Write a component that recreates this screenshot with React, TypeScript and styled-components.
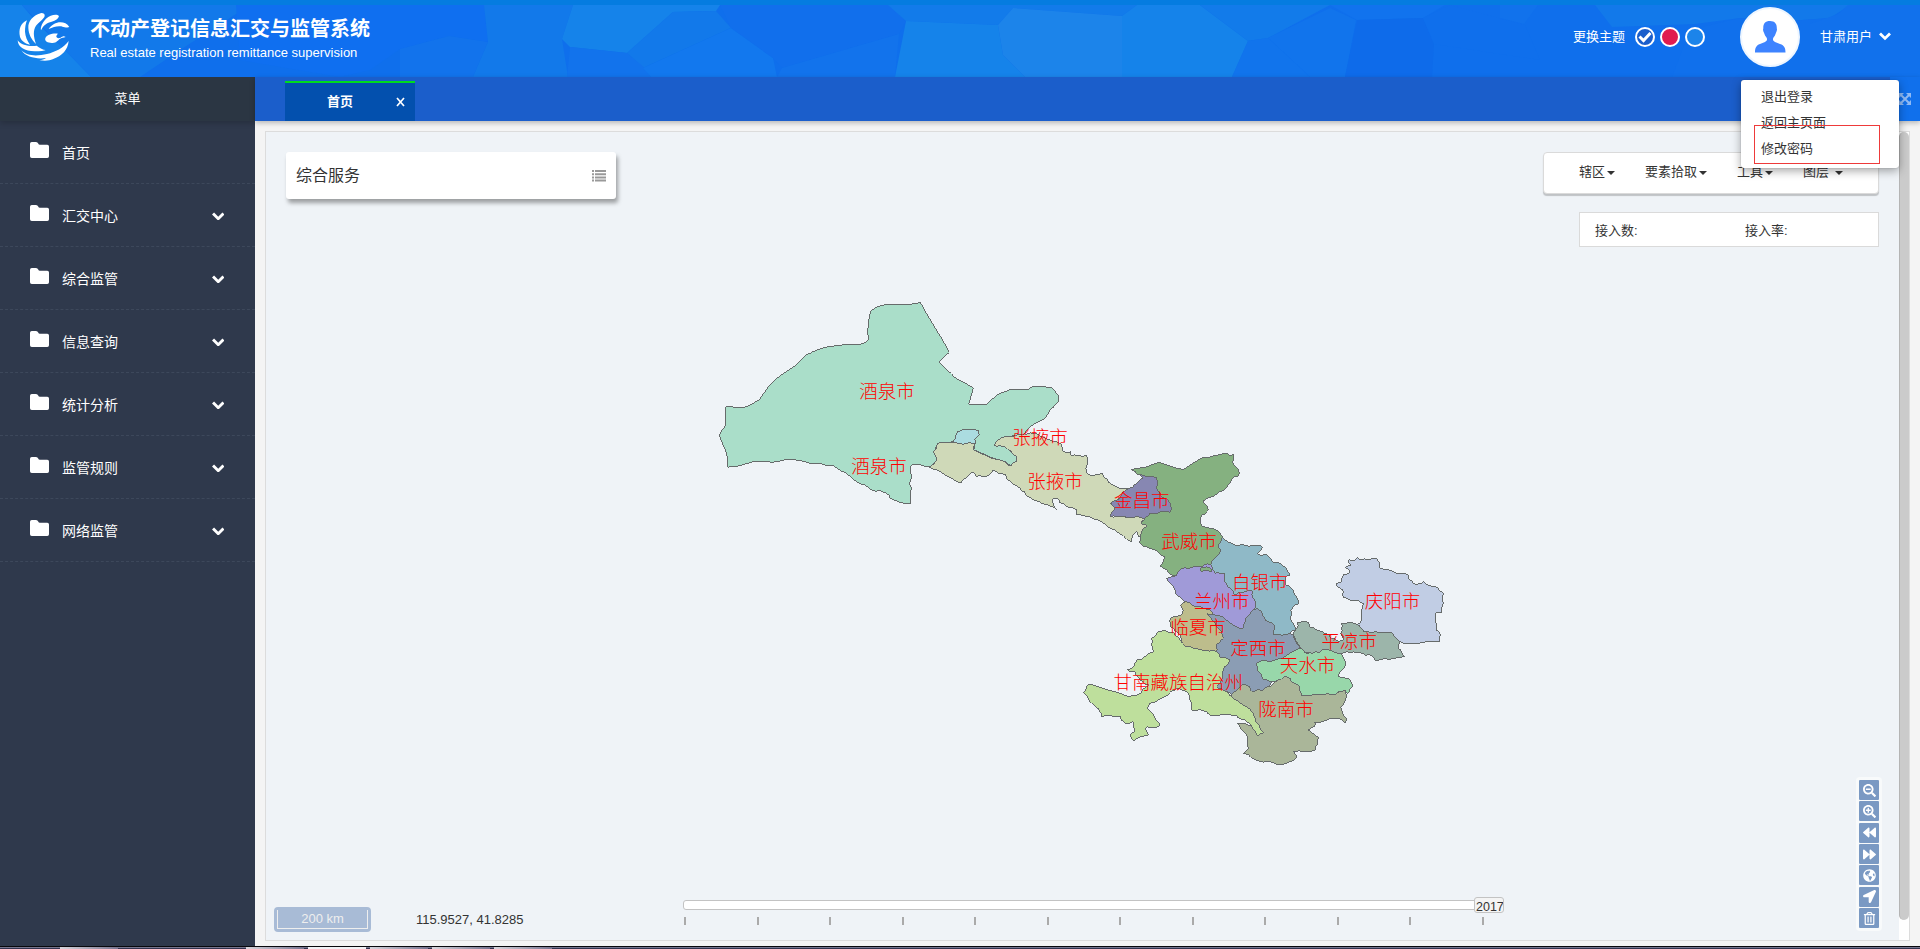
import React from "react";
import styled, { createGlobalStyle } from "styled-components";
import {
  FaSearchMinus,
  FaSearchPlus,
  FaBackward,
  FaForward,
  FaLocationArrow,
  FaGlobeAmericas,
  FaRegTrashAlt,
} from "react-icons/fa";

const GlobalStyle = createGlobalStyle`
  * { box-sizing: border-box; }
  body {
    margin: 0;
    overflow: hidden;
    background: #f3f3f3;
    color: #333;
    font: 13px/20px "Liberation Sans", "Noto Sans CJK SC", sans-serif;
  }
`;

const Page = styled.div`
  display: flex;
  flex-direction: column;
  width: 1920px;
  height: 949px;
`;

/* ---------- header ---------- */

const Header = styled.header`
  position: relative;
  flex: none;
  display: flex;
  height: 77px;
  color: #fff;
  background: #0f6fec;
`;

const HeaderArt = styled.svg`
  position: absolute;
  inset: 0;
`;

const Brand = styled.div`
  position: relative;
  display: flex;
  flex: 1;
`;

const Logo = styled.svg`
  flex: none;
  margin: 4px 10px 0 10px;
`;

const BrandText = styled.div`
  padding-top: 17px;
`;

const Title = styled.h1`
  margin: 0;
  font-size: 20px;
  line-height: 25px;
  font-weight: 700;
`;

const Subtitle = styled.div`
  margin-top: 1px;
  line-height: 20px;
  white-space: nowrap;
`;

const HeaderTools = styled.div`
  position: relative;
  display: flex;
  width: 347px;
`;

const ThemePicker = styled.div`
  display: flex;
  align-items: center;
  gap: 5px;
  height: 74px;
  width: 167px;
`;

const ThemeLabel = styled.span`
  width: 57px;
`;

const Swatch = styled.span<{ $color: string }>`
  display: flex;
  align-items: center;
  justify-content: center;
  width: 20px;
  height: 20px;
  border: 2px solid #fff;
  border-radius: 50%;
  background: ${(p) => p.$color};
`;

const Avatar = styled.div`
  display: flex;
  justify-content: center;
  width: 60px;
  height: 60px;
  margin-top: 7px;
  border-radius: 50%;
  border: 2px solid #eef6ff;
  background: #fff;
`;

const UserName = styled.div`
  display: flex;
  align-items: center;
  gap: 7px;
  height: 73px;
  margin-left: 20px;
`;

/* ---------- sidebar ---------- */

const Body = styled.div`
  display: flex;
  height: 869px;
`;

const Sidebar = styled.nav`
  flex: none;
  width: 255px;
  background: #2f394c;
  color: #fff;
`;

const MenuTitle = styled.div`
  height: 44px;
  background: #2b3643;
  box-shadow: 0 2px 6px rgba(0, 0, 0, 0.2);
  line-height: 44px;
  text-align: center;
`;

const MenuItem = styled.div`
  display: flex;
  align-items: center;
  height: 63px;
  padding: 2px 31px 0 30px;
  border-bottom: 1px dashed #3d485b;
  font-size: 14px;
`;

const FolderIcon = styled.svg`
  width: 19px;
  height: 16px;
  margin-bottom: 7px;
`;

const MenuLabel = styled.span`
  flex: 1;
  padding-left: 13px;
`;

/* ---------- workspace ---------- */

const Workspace = styled.main`
  flex: 1;
  display: flex;
  flex-direction: column;
  background: #f4f4f4;
`;

const TabBar = styled.div`
  position: relative;
  flex: none;
  display: flex;
  align-items: flex-end;
  height: 44px;
  padding-left: 30px;
  background: #1b5ecb;
  box-shadow: 0 2px 5px rgba(0, 0, 0, 0.25);
`;

const Tab = styled.div`
  display: flex;
  align-items: center;
  width: 130px;
  height: 40px;
  padding: 0 10px 0 42px;
  border-top: 2px solid #00dc1c;
  background: #0350ae;
  color: #fff;
  font-weight: 700;
`;

const TabName = styled.span`
  flex: 1;
`;

const FullScreen = styled.div`
  display: flex;
  align-items: center;
  width: 30px;
  height: 44px;
  margin-left: auto;
  padding: 0 0 1px 8px;
  background: #1070ec;
`;

const Panel = styled.section`
  position: relative;
  width: 1645px;
  height: 810px;
  margin: 10px 0 0 10px;
  border: 1px solid #dcdcdc;
  background: #eff3f7;
`;

const MapCanvas = styled.svg`
  display: block;
`;

const MapLabel = styled.text`
  fill: #f00;
  font-family: "Noto Sans CJK SC", sans-serif;
  font-size: 18.5px;
  font-weight: 300;
  text-anchor: middle;
`;

const ScrollTrack = styled.div`
  position: absolute;
  top: 0;
  right: 0;
  width: 10px;
  height: 808px;
  background: #fff;
`;

const ScrollThumb = styled.div`
  width: 10px;
  height: 788px;
  border-left: 1px solid #b4b4b4;
  border-radius: 5px;
  background: #cbcbcb;
`;

const ServiceCard = styled.div`
  position: absolute;
  top: 20px;
  left: 20px;
  display: flex;
  align-items: center;
  justify-content: space-between;
  width: 330px;
  height: 47px;
  padding: 0 10px;
  border-radius: 3px;
  background: #fff;
  box-shadow: 2px 4px 4px rgba(0, 0, 0, 0.35);
  font-size: 16px;
`;

const MapToolbar = styled.div`
  position: absolute;
  top: 20px;
  left: 1277px;
  display: flex;
  width: 336px;
  height: 42px;
  padding: 9px 0 0 35px;
  border: 1px solid #dadada;
  border-radius: 4px;
  background: #fff;
  box-shadow: 0 2px 1px rgba(0, 0, 0, 0.2);
`;

const ToolbarItem = styled.div<{ $width: number; $gap?: number }>`
  display: flex;
  align-items: center;
  gap: ${(p) => p.$gap ?? 2}px;
  width: ${(p) => p.$width}px;
  height: 20px;

  &::after {
    content: "";
    margin-top: 2px;
    border: 4px solid transparent;
    border-top-color: #333;
    border-bottom: 0;
  }
`;

const Stats = styled.div`
  position: absolute;
  top: 80px;
  left: 1313px;
  display: flex;
  width: 300px;
  height: 35px;
  padding-left: 15px;
  border: 1px solid #dadada;
  background: #fff;
  line-height: 35px;
`;

const Stat = styled.span`
  flex: none;
  width: 150px;

  & + & {
    width: 130px;
  }
`;

const NavTools = styled.div`
  position: absolute;
  top: 645px;
  left: 1590px;
  display: flex;
  flex-direction: column;
  gap: 1.35px;
  padding: 3px;
  border-radius: 4px;
  background: #f8fafb;
`;

const NavButton = styled.span`
  display: flex;
  align-items: center;
  justify-content: center;
  width: 20px;
  height: 20px;
  border-radius: 1px;
  background: #7a99c3;
  color: #fff;
  font-size: 13px;
`;

const ScaleBar = styled.div`
  position: absolute;
  left: 8px;
  top: 775px;
  width: 97px;
  height: 25px;
  padding: 3px;
  border-radius: 4px;
  background: #a8bbd6;
`;

const ScaleLine = styled.div`
  height: 19px;
  border: 1px solid #eee;
  border-top: 0;
  color: #eee;
  line-height: 18px;
  text-align: center;
`;

const Coordinates = styled.div`
  position: absolute;
  left: 150px;
  top: 778px;
`;

const Timeline = styled.div`
  position: absolute;
  left: 417px;
  top: 768px;
  width: 820px;
`;

const Rail = styled.div`
  height: 10px;
  border: 1px solid #c3c3c3;
  border-radius: 3px;
  background: #fff;
`;

const Ticks = styled.div`
  display: flex;
  justify-content: space-between;
  width: 800px;
  margin: 7px 0 0 1px;
`;

const Tick = styled.span`
  width: 2px;
  height: 8px;
  background: #aaa;
`;

const Year = styled.div`
  position: absolute;
  top: -3px;
  right: -1px;
  width: 30px;
  height: 16px;
  padding-left: 1px;
  border: 1px solid #c3c3c3;
  border-radius: 3px;
  background: #f4f4f4;
  font-size: 12.5px;
  line-height: 19px;
  overflow: hidden;
`;

const UserMenu = styled.div`
  position: absolute;
  z-index: 2;
  top: 80px;
  left: 1741px;
  width: 158px;
  height: 88px;
  padding: 4px 0 0 20px;
  border-radius: 3px;
  background: #fff;
  box-shadow: 0 3px 10px rgba(0, 0, 0, 0.35), 0 0 1px rgba(0, 0, 0, 0.4);
`;

const UserMenuItem = styled.div`
  height: 26px;
  line-height: 26px;
`;

const Highlight = styled.div`
  position: absolute;
  top: 45px;
  left: 13px;
  width: 126px;
  height: 39px;
  border: 1px solid #ee3a3a;
`;

const Taskbar = styled.div`
  flex: none;
  display: flex;
  height: 3px;
  border-top: 1px solid #08080c;
  background: linear-gradient(#77778f 50%, #33344f 50%);
`;

const TaskbarSlot = styled.span<{ $offset: number; $width: number; $bright?: boolean }>`
  width: ${(p) => p.$width}px;
  height: 2px;
  margin-left: ${(p) => p.$offset}px;
  background: ${(p) => (p.$bright ? "#f2f2f5" : "linear-gradient(90deg, #d8d6dc, #77748f)")};
`;

const Chevron = ({ size = 12 }: { size?: number }) => (
  <svg width={size} height={size * 0.7} viewBox="0 0 12 8" fill="none" stroke="#fff" strokeWidth="2.8">
    <path d="M1 1.3 6 6.2 11 1.3" />
  </svg>
);

/* ---------- map data ---------- */

type Point = [number, number];

const parse = (s: string): Point[] => s.split(" ").map((p) => p.split(",").map(Number) as Point);

// Pseudo-random value in -0.5..0.5 that is the same for an edge in either direction.
const noise = (a: Point, b: Point) => {
  const v = Math.sin((a[0] + b[0]) * 12.9898 + (a[1] + b[1]) * 78.233) * 43758.5453;
  return v - Math.floor(v) - 0.5;
};

// Splits borders into short uneven segments, so that neighbours keep a common edge.
const roughen = (pts: Point[], amount: number): Point[] =>
  pts.flatMap((a, i) => {
    const b = pts[(i + 1) % pts.length];
    const dx = b[0] - a[0];
    const dy = b[1] - a[1];
    const len = Math.hypot(dx, dy);
    if (len < 10) return [a];
    const sign = dx > 0 || (dx === 0 && dy > 0) ? 1 : -1;
    const d = (noise(a, b) * Math.min(len * 0.35, amount) * sign) / len;
    return [a, [(a[0] + b[0]) / 2 - dy * d, (a[1] + b[1]) / 2 + dx * d] as Point];
  });

const outline = (s: string, amount: number) => {
  const pts = roughen(roughen(parse(s), amount), amount);
  return "M" + pts.map((p) => p.map((n) => n.toFixed(1)).join(",")).join("L") + "Z";
};

const westRegions = [
  { fill: "#aadec9", amount: 2, points: "77,380 137,381 150,375 178,360 190,340 205,320 240,288 290,254 318,225 345,213 370,204 435,194 472,195 498,187 505,178 503,150 506,120 512,93 530,81 560,74 625,75 661,67 748,217 718,246 765,293 820,323 806,373 860,373 890,345 930,329 985,329 998,319 1055,323 1076,346 1076,364 1052,388 1032,417 992,438 972,462 905,472 882,495 915,500 950,530 948,545 933,558 915,545 890,538 822,510 824,492 790,489 712,492 701,515 711,542 688,561 655,554 636,555 630,566 634,590 629,612 634,625 631,672 612,670 570,655 569,646 550,636 535,630 530,634 510,628 495,615 485,613 462,600 450,589 440,580 420,571 402,557 385,558 365,552 330,550 300,540 265,538 240,543 215,547 185,544 160,545 125,556 83,562 80,520 58,465 77,435" },
  { fill: "#cfd9b8", amount: 6, points: "712,492 750,487 785,492 808,487 824,492 822,510 890,538 915,545 933,558 948,545 950,530 915,500 882,495 905,472 972,462 1010,460 1050,480 1085,495 1088,512 1112,515 1112,526 1160,526 1160,580 1175,587 1207,580 1210,590 1230,610 1265,627 1285,627 1265,645 1250,660 1232,668 1245,685 1233,710 1265,708 1280,713 1310,708 1335,715 1323,725 1342,738 1325,755 1320,772 1310,753 1298,768 1293,785 1280,778 1230,745 1195,720 1155,708 1130,704 1128,688 1080,668 1075,657 1060,655 1057,665 1070,688 1030,672 985,650 960,625 920,598 917,585 880,570 860,588 830,590 823,578 812,578 783,608 735,585 688,561 711,542 701,515" },
  { fill: "#abdce0", amount: 4, points: "750,487 765,478 773,454 795,449 836,451 838,465 824,478 826,492 808,487 785,492" },
];

const eastRegions = [
  { fill: "#85b180", points: "213,119 298,97 372,118 425,84 500,69 522,75 518,95 536,120 535,138 515,148 493,180 430,213 445,240 425,255 428,290 465,298 487,320 475,345 483,362 455,395 452,405 435,403 405,410 365,415 350,435 337,436 300,408 315,380 290,362 238,338 245,305 262,288 243,275 255,265 270,250 300,245 330,247 334,235 325,210 300,195 290,170 290,143 230,132" },
  { fill: "#8787b2", points: "205,177 222,165 248,145 230,132 290,143 290,170 300,195 325,210 334,235 330,247 300,245 270,250 255,265 230,258 200,263 185,258 153,260 165,235 152,218 170,210 185,195" },
  { fill: "#8fb9c7", points: "487,320 530,347 600,345 607,352 592,370 605,378 620,373 640,397 670,408 690,435 675,445 678,465 700,480 715,522 692,540 692,570 710,600 690,610 640,615 643,590 625,575 605,545 583,540 585,525 577,483 525,495 520,485 492,452 495,432 465,430 452,405 455,395 483,362 475,345" },
  { fill: "#a09ad8", points: "320,445 350,435 365,415 405,410 435,403 452,405 465,430 495,432 492,452 520,485 525,495 577,483 585,525 583,540 572,545 555,575 550,595 545,597 495,567 460,552 445,537 420,530 375,515 350,495 340,470" },
  { fill: "#85b180", points: "422,415 440,411 454,418 456,425 440,420 424,426" },
  { fill: "#bdbd8c", points: "375,515 420,530 445,537 460,552 440,552 455,570 485,605 490,625 468,650 475,668 440,660 410,655 368,640 360,615 333,590 332,565 350,560 362,558 370,540 362,525" },
  { fill: "#8b9db4", points: "440,552 460,552 495,567 545,597 550,595 555,575 572,545 590,535 605,545 625,575 643,590 640,615 690,610 700,615 720,650 718,660 690,670 675,680 645,690 590,700 592,720 610,750 635,755 625,770 600,780 575,784 570,770 545,765 515,793 500,785 470,770 490,720 510,690 475,678 468,650 490,625 485,605 455,570" },
  { fill: "#c1cde4", points: "828,465 845,455 850,435 870,425 856,412 872,405 866,389 885,391 892,383 900,389 925,390 950,386 957,395 960,415 980,419 1000,425 1022,431 1045,435 1050,450 1060,460 1080,461 1090,455 1105,465 1128,470 1137,480 1150,490 1150,520 1145,548 1127,550 1128,600 1140,610 1138,635 1085,638 1030,640 1018,635 1000,612 960,608 912,605 890,583 905,570 905,545 912,520 890,510 850,503 848,480" },
  { fill: "#9cb5aa", points: "700,610 715,585 710,578 745,577 748,590 795,610 835,635 850,630 842,610 845,580 890,583 912,605 960,608 1000,612 1018,635 1015,655 1033,680 950,692 935,677 900,668 860,665 845,672 800,657 755,670 730,660 720,650" },
  { fill: "#98d7aa", points: "590,700 645,690 675,680 690,670 725,655 735,668 755,670 800,657 845,672 858,705 835,740 865,745 879,770 865,790 835,785 825,795 740,797 725,798 720,770 690,745 670,742 655,750 635,755 610,750 592,720" },
  { fill: "#aab699", points: "515,793 545,765 570,770 575,784 600,780 625,770 655,750 670,742 690,745 720,770 725,798 740,797 825,795 855,780 858,805 842,830 858,865 855,878 845,870 800,870 765,877 762,890 745,900 775,920 772,945 765,960 700,965 708,985 665,1003 620,995 580,985 550,970 565,955 560,915 550,905 533,880 550,880 575,890 592,918 610,908 590,880 580,850 520,805" },
  { fill: "#bedf9c", points: "305,603 340,607 368,640 410,655 440,660 475,668 478,680 510,690 490,720 488,740 470,770 500,785 520,805 580,850 590,880 610,908 592,918 575,890 555,870 530,857 450,855 440,845 395,840 395,820 385,790 350,775 325,795 270,820 262,835 285,865 300,880 290,892 260,890 265,915 240,920 220,933 210,915 225,905 220,875 195,880 183,860 125,860 120,845 95,820 70,788 85,763 130,775 205,800 232,795 268,765 240,750 225,725 202,718 220,712 230,690 280,665 275,625" },
];

const cityLabels: [string, number, number][] = [
  ["酒泉市", 887, 391],
  ["酒泉市", 879, 466.5],
  ["张掖市", 1040, 437],
  ["张掖市", 1055, 481.5],
  ["金昌市", 1141.7, 500],
  ["武威市", 1189, 541],
  ["白银市", 1259.7, 582],
  ["兰州市", 1221.7, 601],
  ["庆阳市", 1392.5, 601],
  ["临夏市", 1198, 627],
  ["定西市", 1258, 648.5],
  ["平凉市", 1349.2, 641.5],
  ["天水市", 1307.5, 665],
  ["甘南藏族自治州", 1178.2, 682],
  ["陇南市", 1286, 709.5],
];

const ProvinceMap = () => (
  <MapCanvas width={1633} height={808} viewBox="266 132 1633 808">
    <g stroke="#666b6b" strokeWidth="3" shapeRendering="crispEdges">
      <g transform="translate(700 280) scale(.33333)">
        {westRegions.map((r) => (
          <path key={r.fill} fill={r.fill} d={outline(r.points, r.amount)} />
        ))}
      </g>
      <g transform="translate(1060 430) scale(.33333)">
        {eastRegions.map((r) => (
          <path key={r.points} fill={r.fill} d={outline(r.points, 8)} />
        ))}
      </g>
    </g>
    {cityLabels.map(([name, x, y]) => (
      <MapLabel key={name + y} x={x} y={y + 6.8}>
        {name}
      </MapLabel>
    ))}
  </MapCanvas>
);

/* ---------- header facets ---------- */

const facets: [string, string][] = [
  ["#1583ea", "0,5 22,5 38,24 60,45 91,77 0,77"],
  ["#1279ea", "0,5 22,5 60,45 91,77 140,77 180,50 250,5"],
  ["#0f6ff0", "236,5 400,5 484,5 488,42 449,36 400,49 370,70 340,77 240,60"],
  ["#1273ec", "400,49 449,36 488,42 473,77 400,77"],
  ["#1279ea", "484,5 573,5 562,39 568,77 473,77 488,42"],
  ["#1583ea", "573,5 720,5 716,11 673,12 627,53 570,47 562,39"],
  ["#1279ea", "673,12 716,11 731,28 643,68 627,53"],
  ["#1273ec", "570,47 627,53 645,68 651,77 567,77"],
  ["#1278ee", "731,28 773,58 777,77 651,77 643,68"],
  ["#116fec", "720,5 890,5 906,21 899,34 782,68 773,58 731,28"],
  ["#1273ec", "782,68 899,34 895,77 777,77"],
  ["#127bea", "888,5 1137,5 1122,16 1013,8 998,25 906,21"],
  ["#1583ea", "906,21 998,25 1003,55 1025,77 895,77"],
  ["#1c84ea", "1013,8 1122,16 1122,77 1025,77 1003,55 998,25"],
  ["#1583ea", "1137,5 1200,5 1248,41 1232,77 1122,77 1122,16"],
  ["#127bea", "1200,5 1330,5 1268,38 1248,41"],
  ["#1174ec", "1268,38 1330,8 1356,20 1345,77 1310,77"],
  ["#1174ec", "1248,41 1268,38 1310,77 1232,77"],
  ["#1173ee", "1330,5 1445,5 1423,18 1357,20"],
  ["#0e6bea", "1357,20 1423,18 1434,44 1432,77 1345,77"],
  ["#0f6fec", "1450,5 1525,25 1540,60 1434,44 1423,18"],
  ["#1172ec", "1500,5 1538,5 1524,24 1500,18"],
  ["#1279ea", "1595,5 1850,5 1830,18 1776,22 1740,18 1695,24 1612,27"],
  ["#1070ec", "1690,30 1740,18 1776,22 1830,18 1810,77 1672,77"],
  ["#1171ec", "1838,14 1848,5 1920,5 1920,77 1810,77 1810,24"],
];

const navIcons = [FaSearchMinus, FaSearchPlus, FaBackward, FaForward, FaGlobeAmericas, FaLocationArrow, FaRegTrashAlt];
const menuItems = ["首页", "汇交中心", "综合监管", "信息查询", "统计分析", "监管规则", "网络监管"];

export default function App() {
  return (
    <Page>
      <GlobalStyle />
      <Header>
        <HeaderArt width="1920" height="77">
          {facets.map(([fill, points]) => (
            <polygon key={points} fill={fill} points={points} />
          ))}
          <rect width="1920" height="5" fill="#057ce0" />
        </HeaderArt>
        <Brand>
          <Logo width="70" height="64" viewBox="0 0 210 192" fill="#fff">
            <path d="M51 49C32 57 25 76 30 99c5 13 16 20 30 23-8-12-14-24-15-39 0-13 2-24 6-34Z" />
            <path d="M94 27C69 34 54 51 55 71c1 20 9 35 23 49-8-24-9-41 0-55 8-10 24-20 26-29 1-6-3-9-10-9Z" />
            <path d="M147 36c-7-8-26-3-39 8-11 11-17 25-15 35 8-17 18-22 32-26 12-3 20-8 22-17Z" />
            <path d="M178 69c-10-16-31-17-46-9-8 5-13 10-16 15 14-6 25-10 38-8 7 2 10 6 24 2Z" />
            <path d="M167 99c-7-4-9-1-15 2-7 3-13 1-13-4 0-3 3-6 5-8-16-2-35 3-38 14-3 9 9 15 22 14 12-1 16-8 21-12 6-4 11-3 18-6Z" />
            <path d="M23 109c1 21 21 32 51 33 18 0 29-2 33-4-8-1-17-5-27-13-15 3-46 1-57-16Z" />
            <path d="M34 139c17 18 47 18 77 11 25-6 49-18 65-39-3 27-19 44-48 55-8 4-22 6-40 3 8-1 14-3 20-7-28 4-60-2-74-23Z" />
          </Logo>
          <BrandText>
            <Title>不动产登记信息汇交与监管系统</Title>
            <Subtitle>Real estate registration remittance supervision</Subtitle>
          </BrandText>
        </Brand>
        <HeaderTools>
          <ThemePicker>
            <ThemeLabel>更换主题</ThemeLabel>
            <Swatch $color="#1b5ecb">
              <svg width="14" height="12" viewBox="0 0 14 12" fill="none" stroke="#fff" strokeWidth="3">
                <path d="M1.5 5.5 5.5 9.5 12.5 2" />
              </svg>
            </Swatch>
            <Swatch $color="#e01c50" />
            <Swatch $color="#1c84ea" />
          </ThemePicker>
          <Avatar>
            <svg width="56" height="56" viewBox="0 0 56 56" fill="#3d83ff">
              <path d="M13 43.500c0-4.500 1-7 5-8.500l5-2c1.700-.8 2.200-1.800 2-3.200-.2-1.300-1-1.800-1.800-3-.6-1-.7-2-1.200-3-.8-1.500-1.300-3-.7-4.300C21 15 23 12 28 12s7 3 6.800 7.500c.5 1.300 0 2.800-.8 4.300-.5 1-.6 2-1.200 3-.8 1.200-1.600 1.700-1.800 3-.2 1.400.3 2.400 2 3.200l5 2c4.500 1.500 5.500 4 5.500 8.500Z" />
            </svg>
          </Avatar>
          <UserName>
            甘肃用户
            <Chevron />
          </UserName>
        </HeaderTools>
      </Header>

      <Body>
        <Sidebar>
          <MenuTitle>菜单</MenuTitle>
          {menuItems.map((item, i) => (
            <MenuItem key={item}>
              <FolderIcon viewBox="0 0 19 16" fill="#fff">
                <path d="M0 1.800Q0 0 1.800 0H6Q7.700 0 8.200 1.500 8.600 2.800 10 2.800H17.300Q19 2.800 19 4.500V14.300Q19 16 17.300 16H1.800Q0 16 0 14.300Z" />
              </FolderIcon>
              <MenuLabel>{item}</MenuLabel>
              {i > 0 && <Chevron size={12.5} />}
            </MenuItem>
          ))}
        </Sidebar>

        <Workspace>
          <TabBar>
            <Tab>
              <TabName>首页</TabName>
              <svg width="9" height="10" viewBox="0 0 9 10" stroke="#fff" strokeWidth="1.7">
                <path d="M1 1 8 9M8 1 1 9" />
              </svg>
            </Tab>
            <FullScreen>
              <svg width="14" height="14" viewBox="0 0 14 14" fill="#8fbaf5" stroke="#8fbaf5">
                <path d="M3 3 11 11M11 3 3 11" strokeWidth="2" />
                <path stroke="none" d="M1 1h5L1 6ZM13 1v5L8 1ZM1 13V8l5 5ZM13 13H8l5-5Z" />
              </svg>
            </FullScreen>
          </TabBar>
          <Panel>
            <ProvinceMap />
            <ServiceCard>
              综合服务
              <svg width="14" height="12" viewBox="0 0 14 12" fill="#999">
                <path d="M0 0h2v2H0zM3 0h11v2H3zM0 3.200h2v2H0zM3 3.200h11v2H3zM0 6.400h2v2H0zM3 6.400h11v2H3zM0 9.600h2v2H0zM3 9.600h11v2H3z" />
              </svg>
            </ServiceCard>
            <MapToolbar>
              <ToolbarItem $width={66}>辖区</ToolbarItem>
              <ToolbarItem $width={92}>要素拾取</ToolbarItem>
              <ToolbarItem $width={66}>工具</ToolbarItem>
              <ToolbarItem $width={60} $gap={6}>图层</ToolbarItem>
            </MapToolbar>
            <Stats>
              <Stat>接入数:</Stat>
              <Stat>接入率:</Stat>
            </Stats>
            <ScaleBar>
              <ScaleLine>200 km</ScaleLine>
            </ScaleBar>
            <Coordinates>115.9527, 41.8285</Coordinates>
            <Timeline>
              <Rail />
              <Ticks>
                {Array.from({ length: 12 }, (_, i) => (
                  <Tick key={i} />
                ))}
              </Ticks>
              <Year>2017</Year>
            </Timeline>
            <NavTools>
              {navIcons.map((Icon, i) => (
                <NavButton key={i}>
                  <Icon />
                </NavButton>
              ))}
            </NavTools>
            <ScrollTrack>
              <ScrollThumb />
            </ScrollTrack>
          </Panel>
        </Workspace>
      </Body>

      <Taskbar>
        <TaskbarSlot $offset={60} $width={58} />
        <TaskbarSlot $offset={128} $width={58} />
        <TaskbarSlot $offset={4} $width={58} $bright />
        <TaskbarSlot $offset={4} $width={58} />
        <TaskbarSlot $offset={4} $width={58} />
        <TaskbarSlot $offset={4} $width={58} />
      </Taskbar>

      <UserMenu>
        <UserMenuItem>退出登录</UserMenuItem>
        <UserMenuItem>返回主页面</UserMenuItem>
        <UserMenuItem>修改密码</UserMenuItem>
        <Highlight />
      </UserMenu>
    </Page>
  );
}
